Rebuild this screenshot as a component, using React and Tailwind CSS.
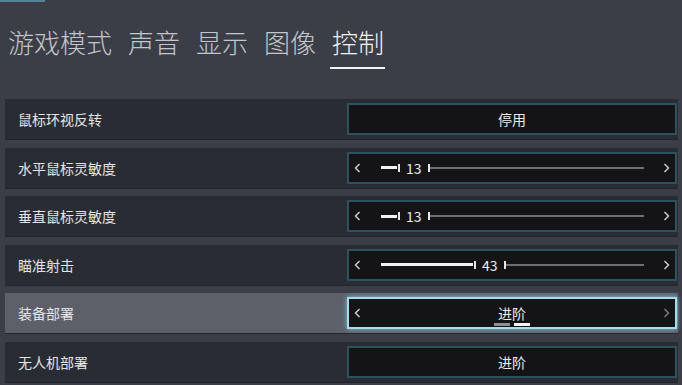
import React from 'react';

const tabs = ['游戏模式', '声音', '显示', '图像', '控制'];

const rows = [
  { label: '鼠标环视反转', type: 'option', value: '停用', arrows: false },
  { label: '水平鼠标灵敏度', type: 'slider', value: 13, fill: 16 },
  { label: '垂直鼠标灵敏度', type: 'slider', value: 13, fill: 16 },
  { label: '瞄准射击', type: 'slider', value: 43, fill: 92 },
  { label: '装备部署', type: 'option', value: '进阶', arrows: true, focused: true },
  { label: '无人机部署', type: 'option', value: '进阶', arrows: false },
];

const Chevron = ({ dir = 'left', dim = false }) => (
  <svg width="7" height="10" viewBox="0 0 7 10" className={dim ? 'text-[#7d7f85]' : 'text-[#d4d4d6]'}>
    {dir === 'left'
      ? <polyline points="5.5,1 1.5,5 5.5,9" fill="none" stroke="currentColor" strokeWidth="1.4" />
      : <polyline points="1.5,1 5.5,5 1.5,9" fill="none" stroke="currentColor" strokeWidth="1.4" />}
  </svg>
);

const Slider = ({ value, fill }) => (
  <div className="flex items-center h-full px-[5px]">
    <Chevron dir="left" />
    <div className="flex-1 flex items-center ml-[20px] mr-[19px]">
      <div className="h-[3px] bg-[#f2f2f2]" style={{ width: fill }} />
      <div className="w-[2px] h-[8px] bg-[#e6e6e6] ml-[1px]" />
      <span className="text-[14px] leading-none text-[#ececec] px-[6px]">{value}</span>
      <div className="w-[2px] h-[8px] bg-[#e6e6e6]" />
      <div className="flex-1 h-[2px] bg-[#6e6f73]" />
    </div>
    <Chevron dir="right" />
  </div>
);

const Option = ({ value, arrows, focused }) => (
  <div className="relative flex items-center justify-center h-full">
    {arrows && <div className="absolute left-[5px] top-0 bottom-0 flex items-center"><Chevron dir="left" /></div>}
    <span className="text-[14px] leading-none text-[#ececec]">{value}</span>
    {arrows && <div className="absolute right-[5px] top-0 bottom-0 flex items-center"><Chevron dir="right" dim /></div>}
    {focused && (
      <div className="absolute bottom-[1px] left-0 right-0 flex justify-center gap-[4px]">
        <div className="w-[16px] h-[3px] bg-[#8c9096]" />
        <div className="w-[16px] h-[3px] bg-[#f4f4f4]" />
      </div>
    )}
  </div>
);

export default function App() {
  return (
    <div className="w-[682px] h-[385px] overflow-hidden bg-[#3b3d47] font-['Noto_Sans_CJK_SC',sans-serif]">
      <div className="w-[45px] h-[2px] bg-[#4f8293]" />
      <div className="h-[97px] pt-[27px] pl-[8px] flex items-start gap-[16px]">
        {tabs.map((t, i) => (
          <div key={t} className="relative">
            <span className={`text-[26px] leading-none font-light ${i === tabs.length - 1 ? 'text-[#f2f2f2]' : 'text-[#c4c6cc]'}`}>{t}</span>
            {i === tabs.length - 1 && <div className="absolute left-[-2px] top-[38px] w-[55px] h-[2px] bg-[#f2f2f2]" />}
          </div>
        ))}
      </div>
      <div className="flex flex-col gap-[7.6px] pl-[5px] pr-[4px]">
        {rows.map(r => (
          <div
            key={r.label}
            className={`h-[41px] flex items-center border-b border-[#23252b] ${r.focused ? 'bg-[#5d6068]' : 'bg-[#2a2c34]'}`}
          >
            <div className="flex-1 pl-[13px] text-[14px] leading-none text-[#e4e4e6]">{r.label}</div>
            <div
              className={`w-[330px] h-[32px] mr-[1px] bg-[#141416] border-2 ${r.focused ? 'border-[#a6dcec] shadow-[0_0_5px_#7cc3d8]' : 'border-[#2c5260]'}`}
            >
              {r.type === 'slider'
                ? <Slider value={r.value} fill={r.fill} />
                : <Option value={r.value} arrows={r.arrows} focused={r.focused} />}
            </div>
          </div>
        ))}
      </div>
    </div>
  );
}
